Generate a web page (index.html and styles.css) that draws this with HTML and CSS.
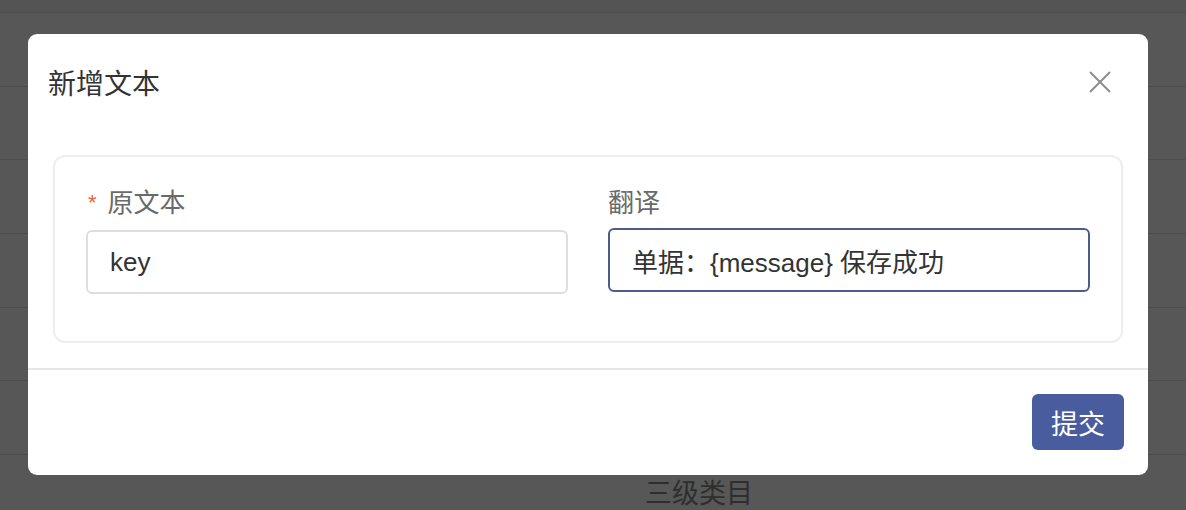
FILE: index.html
```html
<!DOCTYPE html>
<html lang="zh">
<head>
<meta charset="utf-8">
<link rel="stylesheet" href="styles.css">
</head>
<body>
<div class="table">
  <div class="row row-head"></div>
  <div class="row"></div>
  <div class="row"></div>
  <div class="row"></div>
  <div class="row"></div>
  <div class="row"></div>
  <div class="row"></div>
  <div class="row row-text"><span class="cell">三级类目</span></div>
</div>

<div class="modal">
  <div class="modal-header">
    <h2 class="modal-title">新增文本</h2>
    <span class="close">
      <svg width="22" height="22" viewBox="0 0 22 22"><path d="M1 1 L21 21 M21 1 L1 21" stroke="#8e8e8e" stroke-width="2" fill="none"/></svg>
    </span>
  </div>
  <div class="modal-body">
    <div class="card">
      <div class="field">
        <label class="label"><span class="req">*</span>原文本</label>
        <div class="input">key</div>
      </div>
      <div class="field">
        <label class="label">翻译</label>
        <div class="input input-focus">单据：{message} 保存成功</div>
      </div>
    </div>
  </div>
  <div class="modal-footer">
    <button class="btn">提交</button>
  </div>
</div>
</body>
</html>
```

FILE: styles.css
```css
* { box-sizing: border-box; }
html, body { margin: 0; padding: 0; }
body {
  width: 1186px;
  height: 510px;
  overflow: hidden;
  background: #575757;
  font-family: "Liberation Sans", "Noto Sans CJK SC", sans-serif;
  position: relative;
}
.table { display: flex; flex-direction: column; }
.row {
  height: 73.7px;
  border-bottom: 1px solid #4e4e4e;
  flex: none;
}
.row-head { height: 13px; background: #545454; }
.row-text { display: flex; align-items: center; padding-left: 645px; }
.cell { font-size: 27px; color: #2e2e2e; }

.modal {
  position: absolute;
  top: 34px;
  left: 28px;
  width: 1120px;
  height: 441px;
  background: #fff;
  border-radius: 9px;
  display: flex;
  flex-direction: column;
}
.modal-header {
  height: 96px;
  display: flex;
  align-items: center;
  justify-content: space-between;
  padding: 0 37px 0 20px;
}
.modal-title {
  margin: 0;
  font-size: 28px;
  font-weight: normal;
  color: #333;
}
.close { display: flex; }
.modal-body { padding: 25px 25px 25px; border-bottom: 2px solid #e6e6e6; }
.card {
  border: 2px solid #eeeeee;
  border-radius: 12px;
  height: 188px;
  padding: 28px 31px 0;
  display: flex;
  gap: 40px;
}
.field { width: 482px; display: flex; flex-direction: column; }
.label {
  font-size: 26px;
  line-height: 36px;
  color: #6a6a6a;
  margin-bottom: 7px;
}
.req { color: #e6683f; font-size: 22px; margin-left: 2px; margin-right: 11px; position: relative; top: -2px; }
.input {
  height: 64px;
  border: 2px solid #dedede;
  border-radius: 6px;
  font-size: 26px;
  color: #333;
  display: flex;
  align-items: center;
  padding-left: 22px;
}
.input-focus { border-color: #4c5d8c; }
.modal-footer {
  flex: 1;
  display: flex;
  justify-content: flex-end;
  align-items: flex-start;
  padding: 24px 24px 0 0;
}
.btn {
  height: 56px;
  width: 92px;
  border: none;
  border-radius: 6px;
  background: #485c9e;
  color: #fff;
  font-family: inherit;
  font-size: 27px;
  padding: 0;
}
```
